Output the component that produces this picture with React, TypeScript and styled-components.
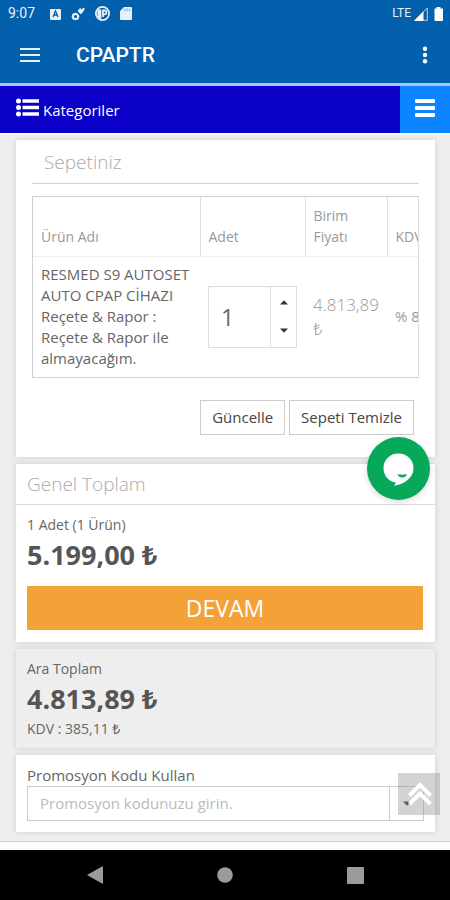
import React, { useState } from "react";
import styled, { createGlobalStyle } from "styled-components";

const GlobalStyle = createGlobalStyle`
  *, *::before, *::after { box-sizing: border-box; }
  body {
    margin: 0;
    background: #eeeeee;
    color: #666666;
    font-family: "Open Sans", "Noto Sans", sans-serif;
    font-size: 15px;
    line-height: 21px;
  }
  button, input { font: inherit; color: inherit; margin: 0; }
  button { padding: 0; border: 0; background: none; cursor: pointer; }
  svg { display: block; }
`;

const Screen = styled.div`
  min-height: 100vh;
  display: flex;
  flex-direction: column;
`;

const StatusBar = styled.div`
  display: flex;
  align-items: center;
  justify-content: space-between;
  height: 27px;
  padding: 0 5px 0 8px;
  background: #0360ad;
  color: #e6f0f9;
  font-family: Roboto, sans-serif;
  font-size: 14px;
`;

const StatusGroup = styled.div<{ $gap: number }>`
  display: flex;
  align-items: center;
  gap: ${(p) => p.$gap}px;
`;

const Clock = styled.span`
  margin-right: 5px;
`;

const Network = styled.span`
  font-size: 12px;
`;

const AppBar = styled.header`
  display: flex;
  align-items: center;
  height: 56px;
  padding: 0 16px 0 20px;
  background: #0360ad;
  color: #ffffff;
`;

const AppTitle = styled.h1`
  flex: 1;
  margin: 0 0 0 36px;
  font-family: Roboto, sans-serif;
  font-size: 21px;
  font-weight: 500;
`;

const CategoryBar = styled.nav`
  display: flex;
  height: 52px;
  border-top: 3px solid #a9c4ee;
  border-bottom: 2px solid #fafafa;
  background: #0a00c8;
  color: #ffffff;
`;

const CategoryButton = styled.button`
  flex: 1;
  display: flex;
  align-items: center;
  gap: 4px;
  padding: 0 16px;
  color: #ffffff;

  span { padding-top: 1px; }
  svg { margin-bottom: 4px; }
`;

const MenuButton = styled.button`
  display: flex;
  align-items: center;
  justify-content: center;
  width: 50px;
  padding-bottom: 4px;
  background: #0a84ff;
  color: #ffffff;
`;

const Content = styled.main`
  flex: 1;
  display: flex;
  flex-direction: column;
  gap: 7px;
  padding: 5px 15px 9px 16px;
  border-bottom: 1px solid #cccccc;
`;

const Card = styled.section<{ $muted?: boolean; $pad: string }>`
  padding: ${(p) => p.$pad};
  background: ${(p) => (p.$muted ? "#eeeeee" : "#ffffff")};
  box-shadow: 0 0 6px rgba(0, 0, 0, 0.13);
`;

const CartHeading = styled.h2`
  margin: 0 0 12px;
  padding: 8px 12px 7px;
  border-bottom: 1px solid #d2d2d2;
  color: #aaaaaa;
  font-size: 19px;
  font-weight: 300;
  line-height: 28px;
`;

const TotalHeading = styled.h2`
  margin: 0 0 9px;
  padding: 6px 11px;
  border-bottom: 1px solid #dddddd;
  color: #aaaaaa;
  font-size: 19px;
  font-weight: 300;
  line-height: 28px;
`;

const TableFrame = styled.div`
  overflow: hidden;
  border: 1px solid #cfcfcf;
  border-right-color: #dddddd;
`;

const Table = styled.table`
  width: 480px;
  table-layout: fixed;
  border-collapse: collapse;
`;

const HeadCell = styled.th<{ $width: number }>`
  width: ${(p) => p.$width}px;
  height: 59px;
  padding: 7px 8px 9px;
  border-right: 1px solid #dddddd;
  border-bottom: 1px solid #eeeeee;
  color: #999999;
  font-size: 14px;
  font-weight: 400;
  text-align: left;
  vertical-align: bottom;
`;

const Cell = styled.td`
  height: 121px;
  padding: 7px 8px;
`;

const PriceCell = styled(Cell)`
  color: #999999;
  font-size: 17px;
  font-weight: 300;
  line-height: 24px;
`;

const RateCell = styled(Cell)`
  color: #999999;
`;

const Stepper = styled.div`
  display: flex;
  width: 89px;
  height: 62px;
  border: 1px solid #dddddd;
`;

const QuantityInput = styled.input`
  flex: 1;
  min-width: 0;
  padding: 0 12px;
  border: 0;
  outline: none;
  font-size: 23px;
`;

const StepButtons = styled.div`
  display: flex;
  flex-direction: column;
  justify-content: center;
  width: 26px;
  border-left: 1px solid #dddddd;
`;

const StepButton = styled.button`
  display: flex;
  align-items: center;
  justify-content: center;
  height: 28px;
`;

const Actions = styled.div`
  display: flex;
  justify-content: flex-end;
  gap: 4px;
  padding: 22px 5px 0 0;
`;

const OutlineButton = styled.button`
  height: 35px;
  padding: 0 11px;
  border: 1px solid #cccccc;
  color: #444444;
`;

const TotalBody = styled.div`
  padding: 0 12px 12px 11px;
`;

const Line = styled.p`
  margin: 0;
  font-size: 14px;
`;

const Amount = styled.p`
  margin: 0;
  color: #555555;
  font-size: 27px;
  font-weight: 700;
  line-height: 39px;
`;

const ContinueButton = styled.button`
  width: 100%;
  height: 44px;
  margin-top: 12px;
  background: #f4a137;
  color: #ffffff;
  font-size: 23px;
`;

const PromoLabel = styled.label`
  display: block;
`;

const PromoField = styled.div`
  display: flex;
  height: 35px;
  border: 1px solid #cccccc;
`;

const PromoInput = styled.input`
  flex: 1;
  min-width: 0;
  padding: 0 12px;
  border: 0;
  outline: none;

  &::placeholder { color: #bbbbbb; opacity: 1; }
`;

const PromoToggle = styled.button`
  display: flex;
  align-items: center;
  justify-content: center;
  width: 34px;
  border-left: 1px solid #cccccc;
`;

const Footer = styled.footer`
  height: 8px;
  background: #ffffff;
`;

const SystemNav = styled.div`
  display: grid;
  grid-template-columns: repeat(3, 130px);
  justify-content: center;
  height: 50px;
  background: #000000;
`;

const SystemButton = styled.button`
  display: flex;
  align-items: center;
  justify-content: center;
`;

const ChatButton = styled.button`
  position: fixed;
  right: 20px;
  bottom: 400px;
  width: 63px;
  height: 63px;
  border-radius: 50%;
  background: #07a85a;
  box-shadow: 0 2px 6px rgba(0, 0, 0, 0.15);
`;

const TopButton = styled.button`
  position: fixed;
  right: 10px;
  bottom: 85px;
  width: 42px;
  height: 42px;
  background: rgba(150, 150, 150, 0.42);
`;

const Caret = ({ up }: { up?: boolean }) => (
  <svg width="8" height="5" viewBox="0 0 8 5" fill="#333333">
    <path d={up ? "M0 4.5L4 .3l4 4.2z" : "M0 .5h8L4 4.7z"} />
  </svg>
);

export default function App() {
  const [quantity, setQuantity] = useState(1);

  return (
    <>
      <GlobalStyle />
      <Screen>
        <StatusBar>
          <StatusGroup $gap={10}>
            <Clock>9:07</Clock>
            <svg width="11" height="12" viewBox="0 0 11 12">
              <rect y="1" width="11" height="11" rx="1" fill="#e6f0f9" />
              <path d="M3 9l2.5-6L8 9M4 7h3" fill="none" stroke="#0360ad" strokeWidth="1.3" />
            </svg>
            <svg width="14" height="14" viewBox="0 0 14 14" fill="none" stroke="#e6f0f9">
              <circle cx="4.5" cy="9.5" r="2.6" strokeWidth="2" />
              <path d="M4.5 5.7v1M4.5 12.3v1M.7 9.5h1M7.3 9.5h1M1.8 6.8l.7.7M6.5 11.5l.7.7M1.8 12.2l.7-.7" strokeWidth="1.4" />
              <path d="M7 4l2-2.500 1.500 1.200L13.300 1 12 4.500l-2.300 2.300z" fill="#e6f0f9" strokeWidth="1" />
            </svg>
            <svg width="15" height="15" viewBox="0 0 15 15">
              <circle cx="7.5" cy="7.5" r="6.6" fill="none" stroke="#e6f0f9" strokeWidth="1.8" />
              <path d="M2.500 3.500h3.800V13.500L2.500 11z" fill="#e6f0f9" />
              <path d="M8 11V4.500h1.500a1.900 1.900 0 010 3.800H8" fill="none" stroke="#e6f0f9" strokeWidth="1.800" />
            </svg>
            <svg width="12" height="13" viewBox="0 0 12 13">
              <path d="M4 0h7a1 1 0 011 1v11a1 1 0 01-1 1H1a1 1 0 01-1-1V4z" fill="#e6f0f9" />
              <path d="M5 1.5v2.7M7.2 1.5v2.7M9.4 1.5v2.7" stroke="#7badd6" strokeWidth="1" />
            </svg>
          </StatusGroup>
          <StatusGroup $gap={3}>
            <Network>LTE</Network>
            <svg width="14" height="14" viewBox="0 0 14 14">
              <path d="M13.3 1v12.3H1z" fill="none" stroke="#b9d3ea" strokeWidth="1" />
              <path d="M9.5 4.3V14H0z" fill="#ffffff" />
            </svg>
            <svg width="14" height="14" viewBox="0 0 14 14">
              <path d="M5.5 0h4v1.5H12V13a1 1 0 01-1 1H4.500a1 1 0 01-1-1V1.500h2z" fill="#ffffff" />
            </svg>
          </StatusGroup>
        </StatusBar>

        <AppBar>
          <button aria-label="Menü">
            <svg width="20" height="14" viewBox="0 0 20 14" stroke="#e6f0f9" strokeWidth="2">
              <path d="M0 1h20M0 7h20M0 13h20" />
            </svg>
          </button>
          <AppTitle>CPAPTR</AppTitle>
          <button aria-label="Diğer seçenekler">
            <svg width="18" height="18" viewBox="0 0 18 18" fill="#ffffff">
              <circle cx="9" cy="2.700" r="2.200" />
              <circle cx="9" cy="9" r="2.200" />
              <circle cx="9" cy="15.300" r="2.200" />
            </svg>
          </button>
        </AppBar>

        <CategoryBar>
          <CategoryButton>
            <svg width="23" height="19" viewBox="0 0 23 19" fill="#ffffff">
              <circle cx="2.500" cy="3" r="2.500" />
              <circle cx="2.500" cy="9.500" r="2.500" />
              <circle cx="2.500" cy="16" r="2.500" />
              <path d="M6.500 1.200H23v3.500H6.500zM6.500 7.700H23v3.500H6.500zM6.500 14.200H23v3.500H6.500z" />
            </svg>
            <span>Kategoriler</span>
          </CategoryButton>
          <MenuButton aria-label="Site menüsü">
            <svg width="20" height="18" viewBox="0 0 20 18" fill="#ffffff">
              <rect width="20" height="4" rx="1" />
              <rect y="7" width="20" height="4" rx="1" />
              <rect y="14" width="20" height="4" rx="1" />
            </svg>
          </MenuButton>
        </CategoryBar>

        <Content>
          <Card $pad="0 16px 22px">
            <CartHeading>Sepetiniz</CartHeading>
            <TableFrame>
              <Table>
                <thead>
                  <tr>
                    <HeadCell $width={167}>Ürün Adı</HeadCell>
                    <HeadCell $width={105}>Adet</HeadCell>
                    <HeadCell $width={82}>Birim Fiyatı</HeadCell>
                    <HeadCell $width={126}>KDV</HeadCell>
                  </tr>
                </thead>
                <tbody>
                  <tr>
                    <Cell>
                      RESMED S9 AUTOSET AUTO CPAP CİHAZI
                      <br />
                      Reçete &amp; Rapor : Reçete &amp; Rapor ile almayacağım.
                    </Cell>
                    <Cell>
                      <Stepper>
                        <QuantityInput
                          aria-label="Adet"
                          inputMode="numeric"
                          value={quantity}
                          onChange={(e) => setQuantity(Number(e.target.value) || 1)}
                        />
                        <StepButtons>
                          <StepButton aria-label="Arttır" onClick={() => setQuantity(quantity + 1)}>
                            <Caret up />
                          </StepButton>
                          <StepButton aria-label="Azalt" onClick={() => setQuantity(Math.max(1, quantity - 1))}>
                            <Caret />
                          </StepButton>
                        </StepButtons>
                      </Stepper>
                    </Cell>
                    <PriceCell>4.813,89 ₺</PriceCell>
                    <RateCell>% 8</RateCell>
                  </tr>
                </tbody>
              </Table>
            </TableFrame>
            <Actions>
              <OutlineButton>Güncelle</OutlineButton>
              <OutlineButton>Sepeti Temizle</OutlineButton>
            </Actions>
          </Card>

          <Card $pad="0">
            <TotalHeading>Genel Toplam</TotalHeading>
            <TotalBody>
              <Line>1 Adet (1 Ürün)</Line>
              <Amount>5.199,00 ₺</Amount>
              <ContinueButton>DEVAM</ContinueButton>
            </TotalBody>
          </Card>

          <Card $muted $pad="9px 11px">
            <Line>Ara Toplam</Line>
            <Amount>4.813,89 ₺</Amount>
            <Line>KDV : 385,11 ₺</Line>
          </Card>

          <Card $pad="10px 11px 11px">
            <PromoLabel htmlFor="promo">Promosyon Kodu Kullan</PromoLabel>
            <PromoField>
              <PromoInput id="promo" placeholder="Promosyon kodunuzu girin." />
              <PromoToggle aria-label="Kodu uygula">
                <Caret />
              </PromoToggle>
            </PromoField>
          </Card>
        </Content>
        <Footer />

        <SystemNav>
          <SystemButton aria-label="Geri">
            <svg width="16" height="18" viewBox="0 0 16 18" fill="#9b9b9b">
              <path d="M0 9L15 .5a.7.7 0 011 .6v15.800a.7.7 0 01-1 .6z" />
            </svg>
          </SystemButton>
          <SystemButton aria-label="Ana ekran">
            <svg width="16" height="16" viewBox="0 0 16 16" fill="#9b9b9b">
              <circle cx="8" cy="8" r="7.800" />
            </svg>
          </SystemButton>
          <SystemButton aria-label="Son uygulamalar">
            <svg width="17" height="17" viewBox="0 0 17 17" fill="#9b9b9b">
              <rect width="17" height="17" rx="1" />
            </svg>
          </SystemButton>
        </SystemNav>
      </Screen>

      <ChatButton aria-label="Canlı destek">
        <svg width="63" height="63" viewBox="0 0 63 63">
          <path d="M31.500 16.500c8.500 0 15 6.300 15 14.500 0 6-3 10-8 13.500-3 2-6.500 3.500-11.500 4.300l2-3.300c-7.500-.8-12.500-7-12.500-14.500 0-8.200 6.500-14.500 15-14.500z" fill="#ffffff" />
          <path d="M30.500 37q4.800 1.600 9.500 0-1 3.500-4.700 3.500T30.500 37z" fill="#07a85a" />
        </svg>
      </ChatButton>
      <TopButton aria-label="Yukarı çık">
        <svg width="42" height="42" viewBox="0 0 42 42" fill="none" stroke="#ffffff" strokeWidth="4">
          <path d="M11.500 22.500L22 12l10.500 10.500M11.500 31L22 20.500 32.500 31" />
        </svg>
      </TopButton>
    </>
  );
}
